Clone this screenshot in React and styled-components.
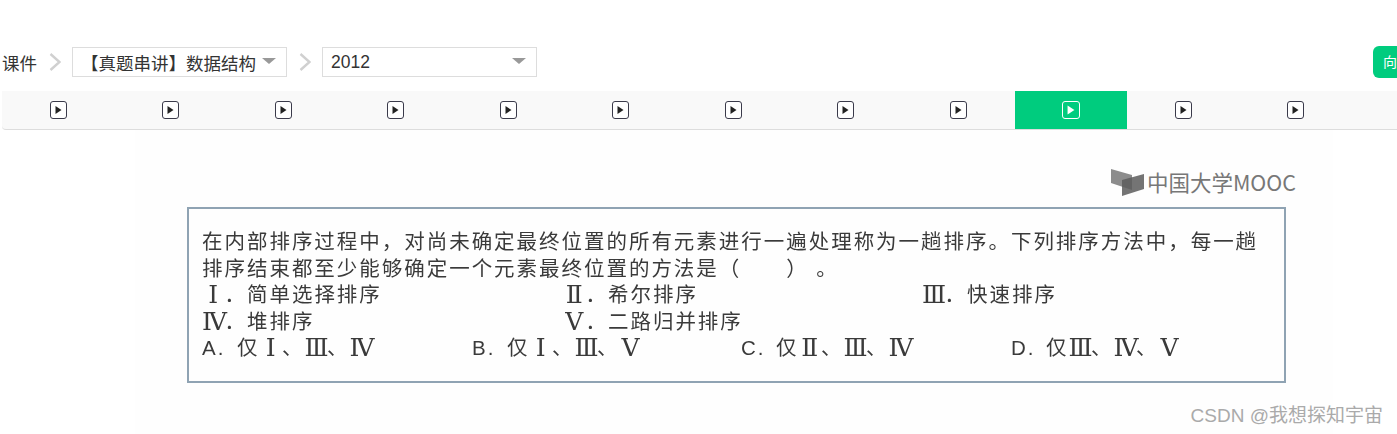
import React from "react";
import styled, { createGlobalStyle } from "styled-components";

const lessons = Array.from({ length: 12 }, (_, i) => i);
const ACTIVE = 9;

const items = [
  ["Ⅰ", "简单选择排序"],
  ["Ⅱ", "希尔排序"],
  ["Ⅲ", "快速排序"],
  ["Ⅳ", "堆排序"],
  ["Ⅴ", "二路归并排序"],
];

const options = [
  ["A.", ["仅", "Ⅰ", "、", "Ⅲ", "、", "Ⅳ"]],
  ["B.", ["仅", "Ⅰ", "、", "Ⅲ", "、", "Ⅴ"]],
  ["C.", ["仅", "Ⅱ", "、", "Ⅲ", "、", "Ⅳ"]],
  ["D.", ["仅", "Ⅲ", "、", "Ⅳ", "、", "Ⅴ"]],
];

const isNumeral = (s) => /[Ⅰ-Ⅴ]/.test(s);

const PlayIcon = ({ active }) => (
  <IconBox $active={active}>
    <svg width={active ? 8 : 7} height={active ? 10 : 8} viewBox="0 0 7 8">
      <path d="M0.5 0 L6.5 4 L0.5 8 Z" fill="currentColor" />
    </svg>
  </IconBox>
);

const Chevron = () => (
  <ChevronIcon width="12" height="18" viewBox="0 0 12 18" fill="none">
    <path d="M1.5 1 L10.5 9 L1.5 17" stroke="#d0d0d0" strokeWidth="2.4" />
  </ChevronIcon>
);

const App = () => {
  return (
    <Page>
      <GlobalStyle />
      <Crumbs>
        <CrumbText>课件</CrumbText>
        <Chevron />
        <Select>
          【真题串讲】数据结构
          <Caret />
        </Select>
        <Chevron />
        <Select>
          2012
          <Caret />
        </Select>
        <AskButton>向</AskButton>
      </Crumbs>

      <TabBar>
        {lessons.map((i) => (
          <Tab key={i} $active={i === ACTIVE}>
            <PlayIcon active={i === ACTIVE} />
          </Tab>
        ))}
      </TabBar>

      <Slide>
        <LogoRow>
          <svg width="34" height="28" viewBox="0 0 34 28">
            <path d="M0 1 L21 7 L21 22 L0 15 Z" fill="#8c8c8c" />
            <path d="M11 12 L33 6 L33 21 L11 28 Z" fill="#5c5c5c" fillOpacity="0.85" />
          </svg>
          <LogoText>中国大学MOOC</LogoText>
        </LogoRow>

        <Question>
          <div>在内部排序过程中，对尚未确定最终位置的所有元素进行一遍处理称为一趟排序。下列排序方法中，每一趟</div>
          <div>排序结束都至少能够确定一个元素最终位置的方法是（　　） 。</div>
          <Items>
            {items.map(([num, text]) => (
              <div key={num}>
                <Numeral>{num}</Numeral>
                <Label>．</Label>
                {text}
              </div>
            ))}
          </Items>
          <Options>
            {options.map(([label, parts]) => (
              <div key={label}>
                <OptionLabel>{label}</OptionLabel>
                {parts.map((part, i) =>
                  isNumeral(part) ? <Numeral key={i}>{part}</Numeral> : <span key={i}>{part}</span>
                )}
              </div>
            ))}
          </Options>
        </Question>
      </Slide>

      <Watermark>CSDN @我想探知宇宙</Watermark>
    </Page>
  );
};

export default App;

const GlobalStyle = createGlobalStyle`
  html, body {
    margin: 0;
    padding: 0;
    background: #fff;
    overflow: hidden;
  }
`;

const Page = styled.div`
  position: relative;
  width: 1397px;
  height: 434px;
  overflow: hidden;
  font-family: "Liberation Sans", "Noto Sans CJK SC", sans-serif;
  color: #333;
`;

const Crumbs = styled.div`
  display: flex;
  align-items: center;
  height: 30px;
  padding: 47px 0 14px 2px;
  font-size: 17.5px;
`;

const CrumbText = styled.span`
  flex: 0 0 47px;
  white-space: nowrap;
`;

const ChevronIcon = styled.svg`
  flex-shrink: 0;
`;

const Select = styled.div`
  box-sizing: border-box;
  display: flex;
  align-items: center;
  flex-shrink: 0;
  position: relative;
  width: 215px;
  height: 30px;
  margin: 0 12px 0 11px;
  padding: 1px 0 0 8px;
  border: 1px solid #ddd;
  background: #fff;
  white-space: nowrap;
`;

const Caret = styled.i`
  position: absolute;
  right: 10px;
  top: 10px;
  width: 0;
  height: 0;
  border-left: 7px solid transparent;
  border-right: 7px solid transparent;
  border-top: 6px solid #999;
`;

const AskButton = styled.div`
  flex-shrink: 0;
  box-sizing: border-box;
  width: 40px;
  height: 32px;
  margin-left: 824px;
  padding-left: 10px;
  line-height: 32px;
  border-radius: 6px;
  background: #00cc7e;
  color: #fff;
  font-size: 14px;
`;

const TabBar = styled.div`
  display: flex;
  box-sizing: border-box;
  height: 39px;
  margin-left: 2px;
  background: #f9f9f9;
  border-bottom: 1px solid #ddd;
  border-radius: 0 0 0 4px;
`;

const Tab = styled.div`
  flex: 0 0 112.5px;
  display: flex;
  align-items: center;
  justify-content: center;
  height: 38px;
  background: ${(props) => (props.$active ? "#00cc7e" : "transparent")};
`;

const IconBox = styled.span`
  box-sizing: border-box;
  display: flex;
  align-items: center;
  justify-content: center;
  width: ${(props) => (props.$active ? "18px" : "17px")};
  height: 18px;
  border: ${(props) => (props.$active ? "1.5px solid #fff" : "1px solid #3a3a4a")};
  border-radius: 3px;
  color: ${(props) => (props.$active ? "#fff" : "#222")};
  background: ${(props) => (props.$active ? "transparent" : "#fff")};
`;

const Slide = styled.div`
  box-sizing: border-box;
  width: 1198px;
  height: 304px;
  margin-left: 135px;
  padding: 38px 0 0 52px;
  background: #fefefe;
`;

const LogoRow = styled.div`
  display: flex;
  align-items: center;
  justify-content: flex-end;
  gap: 2px;
  height: 28px;
  width: 1109px;
  margin-bottom: 11px;
`;

const LogoText = styled.span`
  font-family: "Noto Sans CJK SC", "Liberation Sans", sans-serif;
  font-size: 21.5px;
  line-height: 28px;
  color: #777;
  white-space: nowrap;
`;

const Question = styled.div`
  box-sizing: border-box;
  width: 1099px;
  height: 176px;
  padding: 20px 13px 0;
  border: 2px solid #8fa3b3;
  font-family: "Liberation Sans", "Noto Sans CJK SC", sans-serif;
  font-size: 20.5px;
  line-height: 26.5px;
  letter-spacing: 1.97px;
  color: #3a3a3a;
  white-space: nowrap;
  filter: blur(0.3px);
`;

const Items = styled.div`
  display: grid;
  grid-template-columns: 361px 359px 1fr;
`;

const Options = styled.div`
  display: grid;
  grid-template-columns: 270px 269px 270px 1fr;
`;

const Numeral = styled.span`
  display: inline-block;
  width: 22.47px;
  height: 26.5px;
  overflow: visible;
  font-family: "DejaVu Serif", "Liberation Serif", serif;
  font-size: 25px;
  line-height: 26.5px;
  letter-spacing: 0;
  text-align: center;
  vertical-align: top;
`;

const Label = styled.span`
  display: inline-block;
  width: 22.5px;
`;

const OptionLabel = styled.span`
  display: inline-block;
  width: 35px;
`;

const Watermark = styled.div`
  position: absolute;
  right: 14px;
  top: 404px;
  font-family: "Liberation Sans", "Noto Sans CJK SC", sans-serif;
  font-size: 19px;
  line-height: 24px;
  color: #aaa;
  white-space: nowrap;
`;
